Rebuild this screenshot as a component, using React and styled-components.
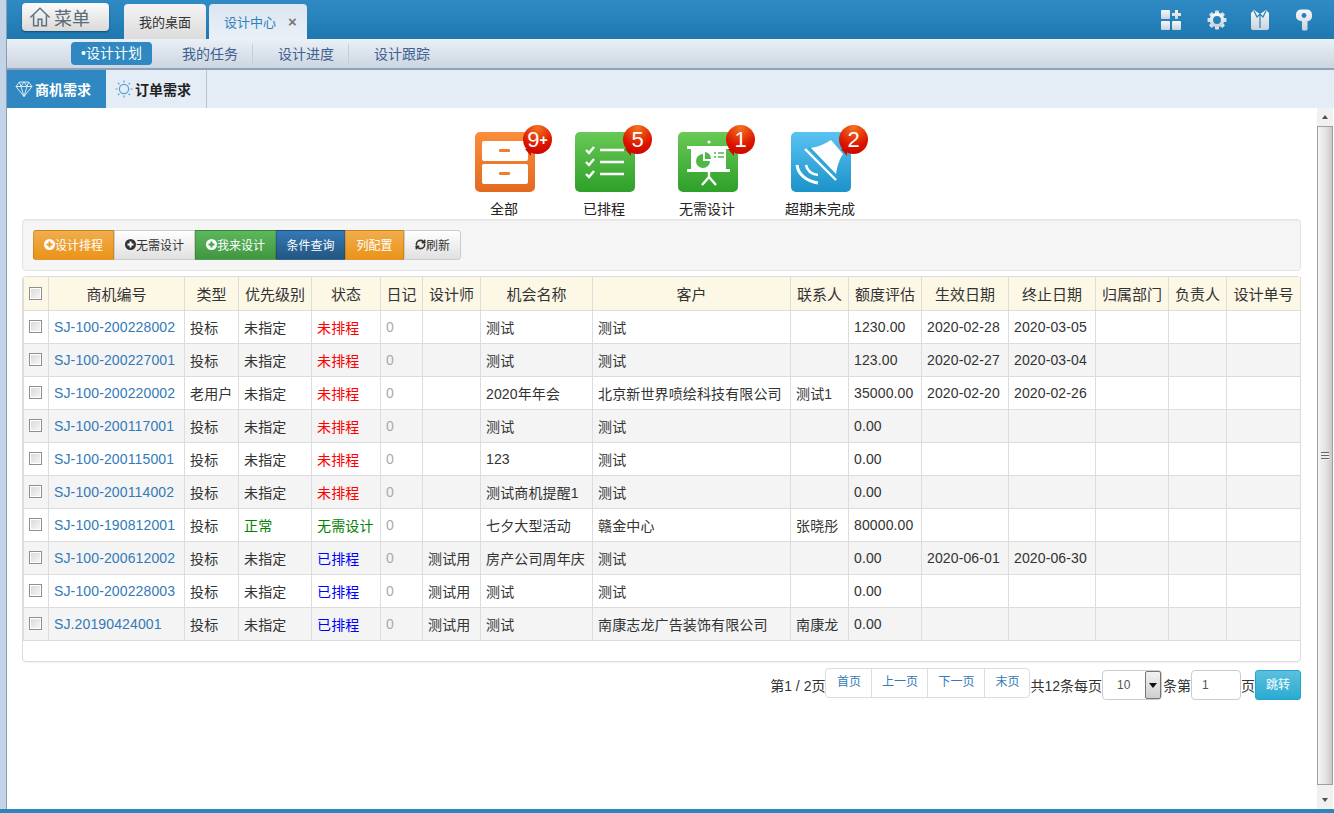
import React from 'react';
import styled, { createGlobalStyle } from 'styled-components';
import { RefreshCw } from 'lucide-react';

const GlobalStyle = createGlobalStyle`
  html, body { margin: 0; padding: 0; height: 100%; overflow: hidden; background: #fff; }
  body {
    font-family: "Liberation Sans", "Noto Sans CJK SC", sans-serif;
    font-size: 14px;
    color: #333;
  }
  * { box-sizing: border-box; }
`;

const rows = [
  { no: 'SJ-100-200228002', type: '投标', level: '未指定', status: '未排程', name: '测试', customer: '测试', amount: '1230.00', start: '2020-02-28', end: '2020-03-05' },
  { no: 'SJ-100-200227001', type: '投标', level: '未指定', status: '未排程', name: '测试', customer: '测试', amount: '123.00', start: '2020-02-27', end: '2020-03-04' },
  { no: 'SJ-100-200220002', type: '老用户', level: '未指定', status: '未排程', name: '2020年年会', customer: '北京新世界喷绘科技有限公司', contact: '测试1', amount: '35000.00', start: '2020-02-20', end: '2020-02-26' },
  { no: 'SJ-100-200117001', type: '投标', level: '未指定', status: '未排程', name: '测试', customer: '测试', amount: '0.00' },
  { no: 'SJ-100-200115001', type: '投标', level: '未指定', status: '未排程', name: '123', customer: '测试', amount: '0.00' },
  { no: 'SJ-100-200114002', type: '投标', level: '未指定', status: '未排程', name: '测试商机提醒1', customer: '测试', amount: '0.00' },
  { no: 'SJ-100-190812001', type: '投标', level: '正常', status: '无需设计', name: '七夕大型活动', customer: '赣金中心', contact: '张晓彤', amount: '80000.00' },
  { no: 'SJ-100-200612002', type: '投标', level: '未指定', status: '已排程', designer: '测试用', name: '房产公司周年庆', customer: '测试', amount: '0.00', start: '2020-06-01', end: '2020-06-30' },
  { no: 'SJ-100-200228003', type: '投标', level: '未指定', status: '已排程', designer: '测试用', name: '测试', customer: '测试', amount: '0.00' },
  { no: 'SJ.20190424001', type: '投标', level: '未指定', status: '已排程', designer: '测试用', name: '测试', customer: '南康志龙广告装饰有限公司', contact: '南康龙', amount: '0.00' },
];

const columns = [
  ['', 25], ['商机编号', 136], ['类型', 54], ['优先级别', 73], ['状态', 69], ['日记', 42],
  ['设计师', 58], ['机会名称', 112], ['客户', 198], ['联系人', 58], ['额度评估', 73],
  ['生效日期', 87], ['终止日期', 87], ['归属部门', 73], ['负责人', 58], ['设计单号', 74],
];

const statusColors = { 未排程: '#f00', 已排程: '#00f', 无需设计: '#008000' };

function DrawerIcon() {
  return (
    <svg width="60" height="60" viewBox="0 0 60 60">
      <defs>
        <linearGradient id="orangeBg" x1="0" y1="0" x2="0" y2="1">
          <stop offset="0" stopColor="#fb8d3c" />
          <stop offset="1" stopColor="#e26a20" />
        </linearGradient>
      </defs>
      <rect width="60" height="60" rx="5" fill="url(#orangeBg)" />
      <rect x="7" y="9" width="46" height="20" rx="2" fill="#fff" />
      <rect x="7" y="32" width="46" height="20" rx="2" fill="#fff" />
      <rect x="24" y="17" width="11" height="3" rx="1" fill="#ee7d30" />
      <rect x="24" y="40" width="11" height="3" rx="1" fill="#ee7d30" />
    </svg>
  );
}

function ListIcon() {
  return (
    <svg width="60" height="60" viewBox="0 0 60 60">
      <defs>
        <linearGradient id="greenBg" x1="0" y1="0" x2="0" y2="1">
          <stop offset="0" stopColor="#68c955" />
          <stop offset="1" stopColor="#2ea02a" />
        </linearGradient>
      </defs>
      <rect width="60" height="60" rx="5" fill="url(#greenBg)" />
      <g fill="none" stroke="#fff" strokeWidth="2.4">
        <path d="M11 18l3 3 5-6M11 30l3 3 5-6M11 42l3 3 5-6" />
        <path d="M25 18h24M25 30h24M25 42h24" />
      </g>
    </svg>
  );
}

function BoardIcon() {
  return (
    <svg width="60" height="60" viewBox="0 0 60 60">
      <defs>
        <linearGradient id="greenBg2" x1="0" y1="0" x2="0" y2="1">
          <stop offset="0" stopColor="#68c955" />
          <stop offset="1" stopColor="#2ea02a" />
        </linearGradient>
      </defs>
      <rect width="60" height="60" rx="5" fill="url(#greenBg2)" />
      <circle cx="31" cy="10" r="1.6" fill="#fff" />
      <rect x="9" y="14" width="43" height="3" fill="#fff" />
      <rect x="13" y="17" width="35" height="20" fill="#fff" />
      <rect x="9" y="37" width="43" height="3" fill="#fff" />
      <path d="M31 40v5M31 45l-7 8M31 45l7 8" stroke="#fff" strokeWidth="2.4" fill="none" />
      <path d="M25 22a7 7 0 1 0 7 7h-7z" fill="#4fb847" />
      <path d="M27 20a7 7 0 0 1 6 7h-6z" fill="#4fb847" />
      <path d="M36 21h2M40 21h6M36 25h2M40 25h6" stroke="#4fb847" strokeWidth="1.6" />
    </svg>
  );
}

function HornIcon() {
  return (
    <svg width="60" height="60" viewBox="0 0 60 60">
      <defs>
        <linearGradient id="blueBg" x1="0" y1="0" x2="0" y2="1">
          <stop offset="0" stopColor="#5ac3f2" />
          <stop offset="1" stopColor="#1b92c9" />
        </linearGradient>
      </defs>
      <rect width="60" height="60" rx="5" fill="url(#blueBg)" />
      <path d="M19 16L45 44C45.500 36 48 28 52 22L40 8C34 12 27 15 19 16z" fill="#fff" />
      <path d="M14 17l31 31" stroke="#fff" strokeWidth="2.4" />
      <path d="M18 15.500l29 30" stroke="#2ea4d8" strokeWidth="2" />
      <path d="M6 33c1 9 9 16 21 18" stroke="#fff" strokeWidth="3" fill="none" />
      <path d="M15 33c1 5 5 9 12 10" stroke="#fff" strokeWidth="2.600" fill="none" />
    </svg>
  );
}

const TopGradient = () => (
  <defs>
    <linearGradient id="topIcon" x1="0" y1="0" x2="0" y2="1">
      <stop offset="0" stopColor="#f6f8fa" />
      <stop offset="1" stopColor="#c9d3dd" />
    </linearGradient>
  </defs>
);

function GridPlusIcon() {
  return (
    <svg width="22" height="22" viewBox="0 0 22 22">
      <TopGradient />
      <g fill="url(#topIcon)">
        <rect x="1" y="1" width="9" height="9" rx="1" />
        <rect x="1" y="12" width="9" height="9" rx="1" />
        <rect x="12" y="12" width="9" height="9" rx="1" />
        <path d="M15 1h3v3h3v3h-3v3h-3V7h-3V4h3z" />
      </g>
    </svg>
  );
}

function GearIcon() {
  const teeth = [0, 45, 90, 135, 180, 225, 270, 315];
  return (
    <svg width="20" height="20" viewBox="0 0 20 20">
      <TopGradient />
      {teeth.map(a => (
        <rect key={a} x="8" y="0.5" width="4" height="4" rx="0.8" fill="#dbe2e9" transform={`rotate(${a} 10 10)`} />
      ))}
      <circle cx="10" cy="10" r="5.6" fill="none" stroke="url(#topIcon)" strokeWidth="3.4" />
    </svg>
  );
}

function ShirtIcon() {
  return (
    <svg width="20" height="22" viewBox="0 0 20 22">
      <TopGradient />
      <path d="M4 1l6 4 6-4 3 3v15a2 2 0 0 1-2 2H3a2 2 0 0 1-2-2V4z" fill="url(#topIcon)" />
      <path d="M4 2l3 6 3-3 3 3 3-6M10 5v14" fill="none" stroke="#2d7fb4" strokeWidth="1.2" />
    </svg>
  );
}

function KeyIcon() {
  return (
    <svg width="18" height="22" viewBox="0 0 18 22">
      <TopGradient />
      <path d="M6 0.500h6a5 5 0 0 1 5 5v2c0 2.500-1.800 4.300-4.500 4.800V20a1.600 1.600 0 0 1-1.600 1.600H8.600A1.600 1.600 0 0 1 7 20v-7.700C3.400 11.800 1 10 1 7.500v-2a5 5 0 0 1 5-5z" fill="url(#topIcon)" />
      <circle cx="9" cy="6.500" r="2.400" fill="#2d7fb4" />
    </svg>
  );
}

function HomeIcon() {
  return (
    <svg width="22" height="22" viewBox="0 0 24 24" fill="none" stroke="#5d7180" strokeWidth="1.6">
      <path d="M1.500 12.500L12 2.500l10.500 10M19 10v11.500h-5v-7h-4v7H5V10" />
    </svg>
  );
}

function DiamondIcon() {
  return (
    <svg width="18" height="18" viewBox="0 0 18 18" fill="none" stroke="#dcebf6" strokeWidth="1">
      <path d="M4.500 2h9L17 6.500 9 16.500 1 6.500zM1 6.500h16M6 6.500L9 16.500l3-10M4.500 2L6 6.500 9 2l3 4.500L13.500 2" />
    </svg>
  );
}

function SunIcon() {
  return (
    <svg width="18" height="18" viewBox="0 0 18 18" fill="none" stroke="#5a9fd0" strokeWidth="1.200">
      <circle cx="9" cy="9" r="4.600" />
      <path d="M9 0.500v2M9 15.500v2M0.500 9h2M15.500 9h2M3 3l1.400 1.400M13.600 13.600L15 15M3 15l1.400-1.400M13.600 4.400L15 3" />
    </svg>
  );
}

function PlusDot({ color, dark }) {
  return (
    <svg width="11" height="11" viewBox="0 0 11 11">
      <circle cx="5.500" cy="5.500" r="5.500" fill={dark ? '#333' : '#fff'} />
      <path d="M5.500 2.500v6M2.500 5.500h6" stroke={color} strokeWidth="2" />
    </svg>
  );
}

const stats = [
  { label: '全部', count: '9', more: true, icon: <DrawerIcon />, width: 60, after: 40 },
  { label: '已排程', count: '5', icon: <ListIcon />, width: 60, after: 43 },
  { label: '无需设计', count: '1', icon: <BoardIcon />, width: 60, after: 47 },
  { label: '超期未完成', count: '2', icon: <HornIcon />, width: 72, after: 0 },
];

export default function App() {
  return (
    <Page>
      <GlobalStyle />
      <Shell>
        <Rail />
        <Main>
          <Header>
            <MenuButton><HomeIcon />菜单</MenuButton>
            <TopTab>我的桌面</TopTab>
            <TopTab $active>设计中心<Close>×</Close></TopTab>
            <HeaderIcons>
              <HeaderIcon $after={24}><GridPlusIcon /></HeaderIcon>
              <HeaderIcon $after={21}><GearIcon /></HeaderIcon>
              <HeaderIcon $after={22}><ShirtIcon /></HeaderIcon>
              <HeaderIcon><KeyIcon /></HeaderIcon>
            </HeaderIcons>
          </Header>
          <SubNav>
            <Pill>•设计计划</Pill>
            <SubItem $line>我的任务</SubItem>
            <SubItem $line>设计进度</SubItem>
            <SubItem>设计跟踪</SubItem>
          </SubNav>
          <TabBar>
            <SideTab $active><DiamondIcon />商机需求</SideTab>
            <SideTab><SunIcon />订单需求</SideTab>
          </TabBar>
          <BodyRow>
            <Content>
              <Stats>
                {stats.map(s => (
                  <Stat key={s.label} $width={s.width} $after={s.after}>
                    <StatIcon>
                      {s.icon}
                      <Badge>{s.count}{s.more && <BadgePlus>+</BadgePlus>}</Badge>
                    </StatIcon>
                    <StatLabel>{s.label}</StatLabel>
                  </Stat>
                ))}
              </Stats>
              <Toolbar>
                <ToolButton $kind="orange" $w={81}><PlusDot color="#ef9c25" />设计排程</ToolButton>
                <ToolButton $w={81}><PlusDot color="#fff" dark />无需设计</ToolButton>
                <ToolButton $kind="green" $w={81}><PlusDot color="#46a24a" />我来设计</ToolButton>
                <ToolButton $kind="blue" $w={69}>条件查询</ToolButton>
                <ToolButton $kind="orange" $w={59}>列配置</ToolButton>
                <ToolButton $w={57}><RefreshCw size={11} strokeWidth={3.500} color="#333" />刷新</ToolButton>
              </Toolbar>
              <TablePanel>
                <Table>
                  <colgroup>
                    {columns.map(([title, width], i) => <col key={i} width={width} />)}
                  </colgroup>
                  <thead>
                    <tr>
                      {columns.map(([title], i) => (
                        <Th key={i}>{i === 0 ? <Check type="checkbox" /> : title}</Th>
                      ))}
                    </tr>
                  </thead>
                  <tbody>
                    {rows.map(r => (
                      <Row key={r.no}>
                        <Td $tick><Check type="checkbox" /></Td>
                        <Td><RowLink>{r.no}</RowLink></Td>
                        <Td>{r.type}</Td>
                        <Td $color={r.level === '正常' ? '#008000' : undefined}>{r.level}</Td>
                        <Td $color={statusColors[r.status]}>{r.status}</Td>
                        <Td $color="#aaa">0</Td>
                        <Td>{r.designer}</Td>
                        <Td>{r.name}</Td>
                        <Td>{r.customer}</Td>
                        <Td>{r.contact}</Td>
                        <Td>{r.amount}</Td>
                        <Td>{r.start}</Td>
                        <Td>{r.end}</Td>
                        <Td />
                        <Td />
                        <Td />
                      </Row>
                    ))}
                  </tbody>
                </Table>
              </TablePanel>
              <PagerRow>
                <span>第1 / 2页</span>
                <PageLinks>
                  <PageLink $w={45}>首页</PageLink>
                  <PageLink $w={56}>上一页</PageLink>
                  <PageLink $w={57}>下一页</PageLink>
                  <PageLink $w={45}>末页</PageLink>
                </PageLinks>
                <span>共12条每页</span>
                <SizeSelect>10<SelectArrow /></SizeSelect>
                <span>条第</span>
                <PageInput>1</PageInput>
                <span>页</span>
                <JumpButton>跳转</JumpButton>
              </PagerRow>
            </Content>
            <ScrollBar>
              <ScrollEnd><ArrowUp /></ScrollEnd>
              <ScrollThumb><Grip /></ScrollThumb>
              <ScrollTrack />
              <ScrollEnd><ArrowDown /></ScrollEnd>
            </ScrollBar>
          </BodyRow>
        </Main>
      </Shell>
      <FootBar />
    </Page>
  );
}

const Page = styled.div`
  width: 1334px;
  height: 813px;
  display: flex;
  flex-direction: column;
  overflow: hidden;
`;

const Shell = styled.div`
  flex: 1;
  min-height: 0;
  display: flex;
`;

const Rail = styled.div`
  width: 7px;
  flex: none;
  background: #c3d4e8;
  border-right: 1px solid #8c9db3;
`;

const Main = styled.div`
  flex: 1;
  min-width: 0;
  display: flex;
  flex-direction: column;
`;

const Header = styled.div`
  height: 39px;
  flex: none;
  display: flex;
  padding-left: 15px;
  background: linear-gradient(#308bc5, #1e77af);
`;

const MenuButton = styled.div`
  width: 87px;
  height: 28px;
  margin: 3px 15px 0 0;
  padding: 0 0 1px 7px;
  display: flex;
  align-items: center;
  gap: 3px;
  font-size: 18px;
  color: #5d6b76;
  background: linear-gradient(#fbfbfb, #d9d9d9);
  border-radius: 4px;
  box-shadow: 0 1px 2px rgba(0, 0, 0, 0.4);
`;

const TopTab = styled.div`
  height: 35px;
  margin-top: 4px;
  margin-right: 3px;
  padding: 0 15px;
  display: flex;
  align-items: center;
  font-size: 13px;
  border-radius: 4px 4px 0 0;
  color: ${p => (p.$active ? '#2f82bb' : '#333')};
  background: ${p => (p.$active ? 'linear-gradient(#dce5f0, #e9f0f8)' : 'linear-gradient(#f3f3f3, #dcdcdc)')};
`;

const Close = styled.span`
  width: 9px;
  margin-left: 12px;
  margin-right: -5px;
  font-size: 15px;
  font-weight: bold;
  color: #777;
`;

const HeaderIcons = styled.div`
  margin-left: auto;
  display: flex;
  align-items: center;
  padding-right: 19px;
`;

const HeaderIcon = styled.div`
  width: 22px;
  margin-right: ${p => p.$after || 0}px;
  display: flex;
  justify-content: center;
`;

const SubNav = styled.div`
  height: 31px;
  flex: none;
  display: flex;
  align-items: center;
  padding-left: 64px;
  background: linear-gradient(#ebf0f7, #ccd5e0);
  border-bottom: 2px solid #8fa3bb;
`;

const Pill = styled.div`
  width: 81px;
  height: 23px;
  margin-right: 16px;
  line-height: 23px;
  text-align: center;
  font-size: 14px;
  color: #fff;
  background: #2f88c1;
  border-radius: 4px;
`;

const SubItem = styled.div`
  height: 20px;
  line-height: 20px;
  padding: 0 14px;
  margin-right: 11px;
  font-size: 14px;
  color: #3d5f92;
  border-right: 1px solid ${p => (p.$line ? '#c4cfdc' : 'transparent')};
`;

const TabBar = styled.div`
  height: 38px;
  flex: none;
  display: flex;
  background: #e4edf6;
`;

const SideTab = styled.div`
  width: 100px;
  padding-left: 8px;
  display: flex;
  align-items: center;
  gap: 2px;
  font-size: 14px;
  font-weight: bold;
  color: ${p => (p.$active ? '#fff' : '#222')};
  background: ${p => (p.$active ? '#2f88c1' : 'transparent')};
  border-right: 1px solid ${p => (p.$active ? '#e4edf6' : '#b3c4d6')};
`;

const BodyRow = styled.div`
  flex: 1;
  min-height: 0;
  display: flex;
`;

const Content = styled.div`
  flex: 1;
  min-width: 0;
  padding: 0 16px 0 15px;
  background: #fff;
`;

const Stats = styled.div`
  height: 111px;
  padding: 24px 0 0 453px;
  display: flex;
`;

const Stat = styled.div`
  width: ${p => p.$width}px;
  margin-right: ${p => p.$after}px;
  display: flex;
  flex-direction: column;
  align-items: center;
`;

const StatIcon = styled.div`
  position: relative;
  width: 60px;
  height: 60px;
`;

const Badge = styled.div`
  position: absolute;
  top: -7px;
  left: 48px;
  width: 29px;
  height: 29px;
  border-radius: 50%;
  display: flex;
  align-items: center;
  justify-content: center;
  color: #fff;
  font-size: 22px;
  background: radial-gradient(circle at 50% 10%, #f4721f, #dc1500 60%, #c40000);
  &::after {
    content: '';
    position: absolute;
    left: 2px;
    bottom: -2px;
    border-top: 7px solid #cc0a00;
    border-left: 6px solid transparent;
  }
`;

const BadgePlus = styled.span`
  font-size: 14px;
  font-weight: bold;
`;

const StatLabel = styled.div`
  margin: 8px 0 0 -2px;
  font-size: 14px;
  line-height: 18px;
  white-space: nowrap;
  color: #222;
`;

const Toolbar = styled.div`
  height: 52px;
  padding: 10px;
  display: flex;
  background: #f5f5f5;
  border: 1px solid #e3e3e3;
  border-radius: 4px;
  box-shadow: inset 0 1px 1px rgba(0, 0, 0, 0.05);
`;

const toolBackgrounds = {
  orange: 'linear-gradient(#f0ad4e, #eb9316)',
  green: 'linear-gradient(#5cb85c, #419641)',
  blue: 'linear-gradient(#337ab7, #245580)',
  plain: 'linear-gradient(#fff, #e0e0e0)',
};

const ToolButton = styled.div`
  width: ${p => p.$w}px;
  height: 30px;
  padding-bottom: 2px;
  display: flex;
  align-items: center;
  justify-content: center;
  font-size: 12px;
  color: ${p => (p.$kind ? '#fff' : '#333')};
  background: ${p => toolBackgrounds[p.$kind || 'plain']};
  border: 1px solid ${p => (p.$kind ? 'rgba(0, 0, 0, 0.12)' : '#ccc')};
  &:first-child { border-radius: 3px 0 0 3px; }
  &:last-child { border-radius: 0 3px 3px 0; }
`;

const TablePanel = styled.div`
  height: 386px;
  margin-top: 5px;
  background: #fff;
  border: 1px solid #ddd;
  border-radius: 4px;
  box-shadow: 0 1px 1px rgba(0, 0, 0, 0.05);
`;

const Table = styled.table`
  width: 1277px;
  table-layout: fixed;
  border-collapse: collapse;
`;

const Th = styled.th`
  height: 33px;
  padding: 0;
  font-size: 15px;
  font-weight: normal;
  text-align: center;
  white-space: nowrap;
  color: #333;
  background: #fdf7e6;
  border: 1px solid #ddd;
  border-top: 0;
  &:first-child { padding-right: 2px; }
`;

const Row = styled.tr`
  &:nth-child(even) td { background: #f4f4f4; }
`;

const Td = styled.td`
  height: 33px;
  padding: ${p => (p.$tick ? '0 2px 1px 0' : '0 5px')};
  font-size: 14px;
  letter-spacing: 0.13px;
  white-space: nowrap;
  overflow: hidden;
  color: ${p => p.$color || '#333'};
  background: #fff;
  border: 1px solid #ddd;
`;

const RowLink = styled.span`
  color: #337ab7;
`;

const Check = styled.input`
  appearance: none;
  display: block;
  width: 13px;
  height: 13px;
  margin: 0 auto;
  background: linear-gradient(135deg, #d8d8d8, #f7f7f7);
  border: 1px solid #8f8f8f;
  box-shadow: inset 0 0 0 1px #fff;
`;

const PagerRow = styled.div`
  height: 30px;
  margin-top: 8px;
  display: flex;
  align-items: center;
  justify-content: flex-end;
  font-size: 14px;
  color: #333;
  white-space: nowrap;
`;

const PageLinks = styled.div`
  height: 30px;
  margin-top: -5px;
  display: flex;
  background: #fff;
  border: 1px solid #ddd;
  border-radius: 4px;
`;

const PageLink = styled.div`
  width: ${p => p.$w}px;
  line-height: 26px;
  text-align: center;
  font-size: 12px;
  color: #337ab7;
  & + & { border-left: 1px solid #ddd; }
`;

const SizeSelect = styled.div`
  position: relative;
  width: 60px;
  height: 30px;
  margin-right: 1px;
  padding-left: 14px;
  line-height: 28px;
  font-size: 12px;
  color: #555;
  background: #fff;
  border: 1px solid #ccc;
  border-radius: 4px;
`;

const SelectArrow = styled.div`
  position: absolute;
  top: 0;
  right: 0;
  bottom: 0;
  width: 16px;
  background: linear-gradient(#f2f2f2, #cfcfcf);
  border: 1px solid #777;
  border-radius: 2px;
  &::after {
    content: '';
    position: absolute;
    top: 11px;
    left: 3px;
    border-top: 5px solid #111;
    border-left: 4px solid transparent;
    border-right: 4px solid transparent;
  }
`;

const PageInput = styled.div`
  width: 50px;
  height: 30px;
  padding-left: 10px;
  line-height: 28px;
  font-size: 12px;
  color: #555;
  background: #fff;
  border: 1px solid #ccc;
  border-radius: 4px;
`;

const JumpButton = styled.div`
  width: 46px;
  height: 30px;
  line-height: 28px;
  text-align: center;
  font-size: 12px;
  color: #fff;
  background: linear-gradient(#5bc0de, #2aabd2);
  border: 1px solid #28a4c9;
  border-radius: 3px;
`;

const ScrollBar = styled.div`
  width: 17px;
  flex: none;
  display: flex;
  flex-direction: column;
  background: #f1f1f1;
  border-right: 1px solid #fff;
`;

const ScrollEnd = styled.div`
  height: 18px;
  flex: none;
  display: flex;
  align-items: center;
  justify-content: center;
  background: #f1f1f1;
`;

const ArrowUp = styled.div`
  border-bottom: 4px solid #505050;
  border-left: 3.500px solid transparent;
  border-right: 3.500px solid transparent;
`;

const ArrowDown = styled.div`
  border-top: 4px solid #505050;
  border-left: 3.500px solid transparent;
  border-right: 3.500px solid transparent;
`;

const ScrollThumb = styled.div`
  height: 659px;
  flex: none;
  display: flex;
  align-items: center;
  justify-content: center;
  background: linear-gradient(90deg, #f4f4f4, #e6e6e6 50%, #c9c9c9);
  border: 1px solid #a0a0a0;
`;

const Grip = styled.div`
  width: 8px;
  height: 8px;
  background: repeating-linear-gradient(#666 0 1px, #eee 1px 3px);
`;

const ScrollTrack = styled.div`
  flex: 1;
`;

const FootBar = styled.div`
  height: 4px;
  flex: none;
  background: #2a86bb;
`;
